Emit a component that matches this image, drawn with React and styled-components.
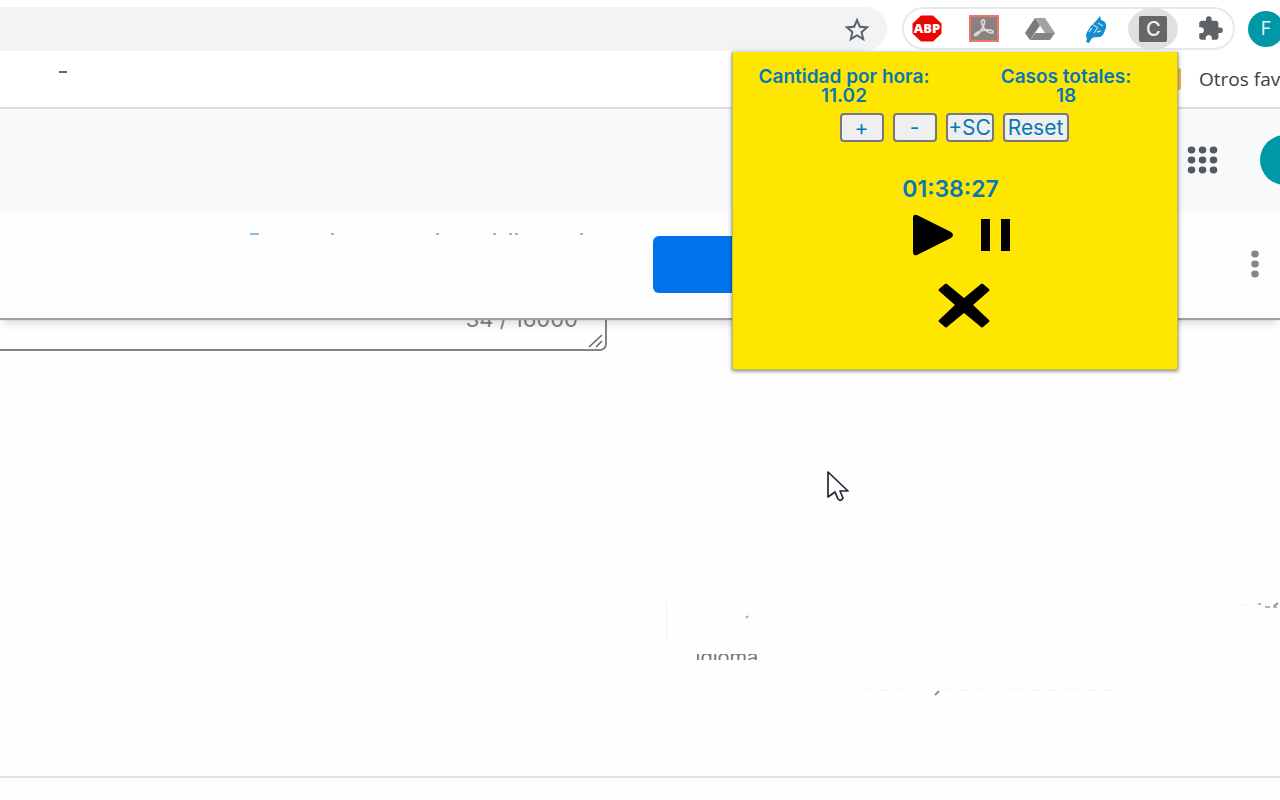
import React from "react";
import styled, { createGlobalStyle } from "styled-components";
import { MdStarBorder, MdExtension } from "react-icons/md";

const GlobalStyle = createGlobalStyle`
  *, *::before, *::after { box-sizing: border-box; }
  body {
    margin: 0;
    background: #fefefe;
    font-family: "Open Sans", "Liberation Sans", sans-serif;
    overflow-x: hidden;
  }
  button { font: inherit; cursor: pointer; }
`;

const Page = styled.div`
  position: relative;
  min-height: 100vh;
  overflow: hidden;
  display: flex;
  flex-direction: column;
`;

const BrowserBar = styled.header`
  display: flex;
  align-items: flex-start;
  height: 52px;
  padding-top: 7px;
  background: #fff;
`;

const AddressBar = styled.div`
  flex: 1;
  display: flex;
  justify-content: flex-end;
  align-items: center;
  height: 44px;
  padding-right: 17px;
  margin-right: 15px;
  background: #f1f3f4;
  border-radius: 0 22px 22px 0;
`;

const IconButton = styled.button`
  display: grid;
  place-items: center;
  flex: none;
  width: ${(p) => p.$size || 28}px;
  height: ${(p) => p.$size || 28}px;
  padding: 0;
  border: 0;
  background: none;
  color: #5f6368;
  svg { display: block; }
`;

const Extensions = styled.div`
  display: flex;
  align-items: center;
  justify-content: space-between;
  width: 333px;
  height: 43px;
  padding: 0 8px;
  margin-right: 13px;
  border: 2px solid #e8e9ec;
  border-radius: 22px;
`;

const ActiveExtension = styled(IconButton)`
  width: 50px;
  height: 42px;
  margin: 0 -10px;
  border-radius: 50%;
  background: #e0e0e0;
`;

const Badge = styled.span`
  display: grid;
  place-items: center;
  width: 28px;
  height: 26px;
  border-radius: 2px;
  background: #666;
  color: #eee;
  font: 500 20px/26px Inter, sans-serif;
`;

const AvatarSlot = styled.div`
  flex: none;
  display: flex;
  align-items: center;
  width: ${(p) => p.$width}px;
  height: ${(p) => p.$height}px;
  overflow: hidden;
`;

const Avatar = styled.button`
  flex: none;
  width: ${(p) => p.$size}px;
  height: ${(p) => p.$size}px;
  padding: 0;
  border: 0;
  border-radius: 50%;
  background: #0097a7;
  color: #e8f6f7;
  font: 400 18px/36px Inter, sans-serif;
`;

const BookmarksBar = styled.nav`
  display: flex;
  align-items: center;
  justify-content: space-between;
  height: 57px;
  padding: 0 0 2px 59px;
  background: #fff;
  border-bottom: 2px solid #dadee2;
`;

const Dash = styled.span`
  width: 8px;
  height: 2px;
  margin-bottom: 13px;
  background: #626873;
`;

const BookmarkLink = styled.a`
  display: flex;
  gap: 18px;
  align-items: center;
  width: 106px;
  white-space: nowrap;
  color: #3c4043;
  font-size: 19px;
  line-height: 26px;
  text-decoration: none;
`;

const Folder = styled.span`
  flex: none;
  width: 7px;
  height: 22px;
  border-radius: 2px;
  background: #f3bd4c;
`;

const AppHeader = styled.div`
  display: flex;
  align-items: center;
  justify-content: flex-end;
  gap: 41px;
  height: 101px;
  background: #f8f9fb;
`;

const ActionBar = styled.div`
  position: relative;
  z-index: 1;
  display: flex;
  align-items: center;
  height: 108px;
  background: #fdfdfe;
  box-shadow: 0 2px 1px #9a9fa2, 0 10px 8px -4px #0002;
`;

const LeftHalf = styled.div`
  width: 51%;
  height: 62px;
  padding-left: 248px;
  overflow: hidden;
`;

const PrimaryButton = styled.button`
  width: 150px;
  height: 57px;
  border: 0;
  border-radius: 6px;
  background: #0073ec;
`;

const MoreSlot = styled.div`
  margin: 0 10px 0 auto;
`;

const Content = styled.main`
  position: relative;
  height: 460px;
  border-bottom: 2px solid #dfe0e6;
`;

const Field = styled.label`
  display: flex;
  flex-direction: column;
  width: 607px;
  max-width: 100%;
  height: 73px;
  margin-top: -40px;
  border: 2px solid #80868b;
  border-width: 0 2px 2px 0;
  border-radius: 0 0 7px 0;
`;

const FieldInput = styled.textarea`
  height: 28px;
  border: 0;
  padding: 0;
  outline: 0;
  resize: none;
  background: transparent;
`;

const FieldFooter = styled.span`
  display: flex;
  justify-content: flex-end;
  align-items: flex-end;
  gap: 9px;
`;

const Counter = styled.span`
  align-self: flex-start;
  color: #808080;
  font: 400 22px/26px Inter, sans-serif;
`;

const ResultPanel = styled.section`
  position: relative;
  margin: 251px 0 0 52%;
  padding: 52px 0 0 30px;
  color: #70757a;
`;

const ClippedLine = styled.p`
  display: flex;
  align-items: center;
  width: 67px;
  height: 6px;
  margin: 0;
  overflow: hidden;
  font: 400 20px/20px Inter, sans-serif;
`;

const TraceLayer = styled.svg`
  position: absolute;
  top: 0;
  left: 0;
`;

const Popup = styled.aside`
  position: absolute;
  z-index: 2;
  top: 52px;
  right: 102px;
  width: 446px;
  height: 318px;
  padding-top: 15px;
  border: 1px solid #c5bb51;
  border-top: 0;
  background: #ffe600;
  color: #0878b4;
  font-family: Inter, "Liberation Sans", sans-serif;
  text-align: center;
  box-shadow: 0 1px 4px #0008;
`;

const Stats = styled.dl`
  display: grid;
  grid-template-columns: 1fr 1fr;
  margin: 0;
`;

const Stat = styled.div`
  font-size: 19px;
  font-weight: 600;
  line-height: 19px;
  dt, dd { margin: 0; }
`;

const Controls = styled.div`
  display: flex;
  justify-content: center;
  gap: 9px;
  margin-top: 8px;
  padding-right: 2px;
`;

const CountButton = styled.button`
  width: ${(p) => p.$width}px;
  height: 29px;
  padding: 0;
  border: 2px solid #77777f;
  border-radius: 4px;
  background: #efefef;
  color: #0878b4;
  font-size: 21px;
  line-height: 24px;
  white-space: nowrap;
`;

const Timer = styled.time`
  display: block;
  margin-top: 34px;
  padding-right: 9px;
  font-size: 23px;
  font-weight: 600;
  line-height: 26px;
`;

const Playback = styled.div`
  display: flex;
  justify-content: center;
  gap: 22px;
  margin-top: 12px;
  padding-left: 20px;
`;

const CloseRow = styled.div`
  display: flex;
  justify-content: center;
  margin-top: 24px;
  padding-left: 18px;
`;

const Pointer = styled.svg`
  position: absolute;
  z-index: 3;
  left: 826px;
  top: 470px;
`;

const Dots = ({ columns, rows, stepX, stepY, color }) => (
  <svg width={columns * stepX} height={rows * stepY} fill={color} aria-hidden="true">
    {Array.from({ length: columns * rows }, (_, i) => (
      <ellipse
        key={i}
        cx={(i % columns) * stepX + stepX / 2}
        cy={Math.floor(i / columns) * stepY + stepY / 2}
        rx="3.8"
        ry="3.4"
      />
    ))}
  </svg>
);

const AdblockIcon = () => (
  <svg width="30" height="27" viewBox="0 0 30 27">
    <path d="M9 .5h12l8.500 8v10l-8.500 8H9l-8.500-8v-10z" fill="#eb0505" />
    <text x="15" y="18" textAnchor="middle" fill="#fff" fontFamily="Open Sans" fontWeight="800" fontSize="13">ABP</text>
  </svg>
);

const AcrobatIcon = () => (
  <svg width="30" height="27" viewBox="0 0 30 27">
    <rect x="1" y="1" width="28" height="25" fill="#8b8180" stroke="#ed7668" strokeWidth="2" />
    <path
      d="M13.500 5c3-1 2.500 4 0 8-2 4-5.500 8-7.500 7.500S9 16 14 15.300s10-.3 10 1.700-5.500 1-8.500-3S11.500 6 13.500 5z"
      fill="none"
      stroke="#ddd9d8"
      strokeWidth="1.700"
    />
  </svg>
);

const DriveIcon = () => (
  <svg width="30" height="24" viewBox="0 0 30 24">
    <path d="M10 1 0 16l5 7L15 8.500z" fill="#7c7c7c" />
    <path d="M10 1h10l10 15H20z" fill="#a2a2a2" />
    <path d="M10.500 16H30l-5 7H5z" fill="#858585" />
  </svg>
);

const FeatherIcon = () => (
  <svg width="24" height="28" viewBox="0 0 24 28">
    <path
      d="M16 1 17 5q6 1 5 8l-3 7q-3 3-7 2l-4 1-3 5-3-1 1-4q-2-2 0-6l4-6 5-5z"
      fill="#188bce"
    />
    <path d="m5 17 3-4M10 18l4-6M9 10l4 2M14 8l5 3M13 17l4-1" stroke="#a9dbf4" strokeWidth="1.300" fill="none" />
  </svg>
);

const Traces = () => (
  <svg width="340" height="24" aria-hidden="true">
    <path
      d="M2 1h9M83 1h3M188 1h3M245 1h3M261 1h3M267 1h3M332 1h3"
      stroke="#8bbcf3"
      strokeWidth="2"
    />
  </svg>
);

const PanelTraces = () => (
  <TraceLayer width="614" height="110" aria-hidden="true" fill="none">
    <path d="M0 0v42" stroke="#eff4fb" strokeWidth="2" />
    <path d="M56 14h5M65 14h7" stroke="#eceeef" />
    <path d="m80 16 2-2" stroke="#a9acaf" strokeWidth="2" />
    <path d="m269 93 4-4M608 4l4-3" stroke="#8f9295" strokeWidth="2" />
    <path d="M200 88h52M280 88h42M339 88h118M575 3h7" stroke="#eef2f5" strokeDasharray="8 6" />
    <path d="M592 2h3M599 5h5M607 5h4" stroke="#999ea1" strokeWidth="1.500" />
    <path d="M371 36h4" stroke="#f1f2f3" />
  </TraceLayer>
);

export default function App() {
  return (
    <>
      <GlobalStyle />
      <Page>
        <BrowserBar>
          <AddressBar>
            <IconButton aria-label="Favorito"><MdStarBorder size={30} /></IconButton>
          </AddressBar>
          <Extensions>
            <IconButton aria-label="Adblock Plus"><AdblockIcon /></IconButton>
            <IconButton aria-label="Acrobat"><AcrobatIcon /></IconButton>
            <IconButton aria-label="Drive"><DriveIcon /></IconButton>
            <IconButton aria-label="Pluma"><FeatherIcon /></IconButton>
            <ActiveExtension aria-label="Contador"><Badge>C</Badge></ActiveExtension>
            <IconButton aria-label="Extensiones"><MdExtension size={27} /></IconButton>
          </Extensions>
          <AvatarSlot $width={32} $height={43}>
            <Avatar $size={36}>F</Avatar>
          </AvatarSlot>
        </BrowserBar>

        <BookmarksBar>
          <Dash />
          <BookmarkLink href="#favoritos"><Folder />Otros fav</BookmarkLink>
        </BookmarksBar>

        <AppHeader>
          <IconButton $size={33} aria-label="Aplicaciones">
            <Dots columns={3} rows={3} stepX={11} stepY={10} color="#555a60" />
          </IconButton>
          <AvatarSlot $width={20} $height={50}>
            <Avatar $size={50} aria-label="Cuenta" />
          </AvatarSlot>
        </AppHeader>

        <ActionBar>
          <LeftHalf><Traces /></LeftHalf>
          <PrimaryButton aria-label="Enviar" />
          <MoreSlot>
            <IconButton $size={30} aria-label="Más opciones">
              <Dots columns={1} rows={3} stepX={10} stepY={10} color="#80868b" />
            </IconButton>
          </MoreSlot>
        </ActionBar>

        <Content>
          <Field>
            <FieldInput aria-label="Texto" />
            <FieldFooter>
              <Counter>34 / 16000</Counter>
              <svg width="18" height="42" viewBox="0 0 18 42" aria-hidden="true">
                <path d="m2 41 13-12M9 41l6-6" stroke="#666" strokeWidth="1.500" />
              </svg>
            </FieldFooter>
          </Field>
          <ResultPanel>
            <PanelTraces />
            <ClippedLine>idioma</ClippedLine>
          </ResultPanel>
        </Content>

        <Popup>
          <Stats>
            <Stat><dt>Cantidad por hora:</dt><dd>11.02</dd></Stat>
            <Stat><dt>Casos totales:</dt><dd>18</dd></Stat>
          </Stats>
          <Controls>
            <CountButton $width={44}>+</CountButton>
            <CountButton $width={44}>-</CountButton>
            <CountButton $width={48}>+SC</CountButton>
            <CountButton $width={66}>Reset</CountButton>
          </Controls>
          <Timer>01:38:27</Timer>
          <Playback>
            <IconButton $size={42} aria-label="Iniciar">
              <svg width="42" height="42" fill="#000">
                <path d="M1 4q0-4 4-3l34 17q4 3 0 6L5 41q-4 1-4-3z" />
              </svg>
            </IconButton>
            <IconButton $size={42} aria-label="Pausar">
              <svg width="42" height="42" fill="#000">
                <path d="M5 5h9v32H5zM25 5h9v32h-9z" />
              </svg>
            </IconButton>
          </Playback>
          <CloseRow>
            <IconButton $size={52} aria-label="Cerrar">
              <svg width="52" height="52" fill="#000">
                <path d="M9 4q-1-1-2 0L1 9q-1 1 0 2l16 14L1 40q-1 1 0 2l6 5q1 1 2 0l17-14 17 14q1 1 2 0l6-5q1-1 0-2L35 25l16-14q1-1 0-2l-6-5q-1-1-2 0L26 18z" />
              </svg>
            </IconButton>
          </CloseRow>
        </Popup>

        <Pointer width="24" height="34" viewBox="0 0 24 34" aria-hidden="true">
          <path
            d="M2 2v25l7-5 3 7q3 3 5-1l-3-7h8z"
            fill="#fff"
            stroke="#252432"
            strokeWidth="1.700"
            strokeLinejoin="round"
          />
        </Pointer>
      </Page>
    </>
  );
}
